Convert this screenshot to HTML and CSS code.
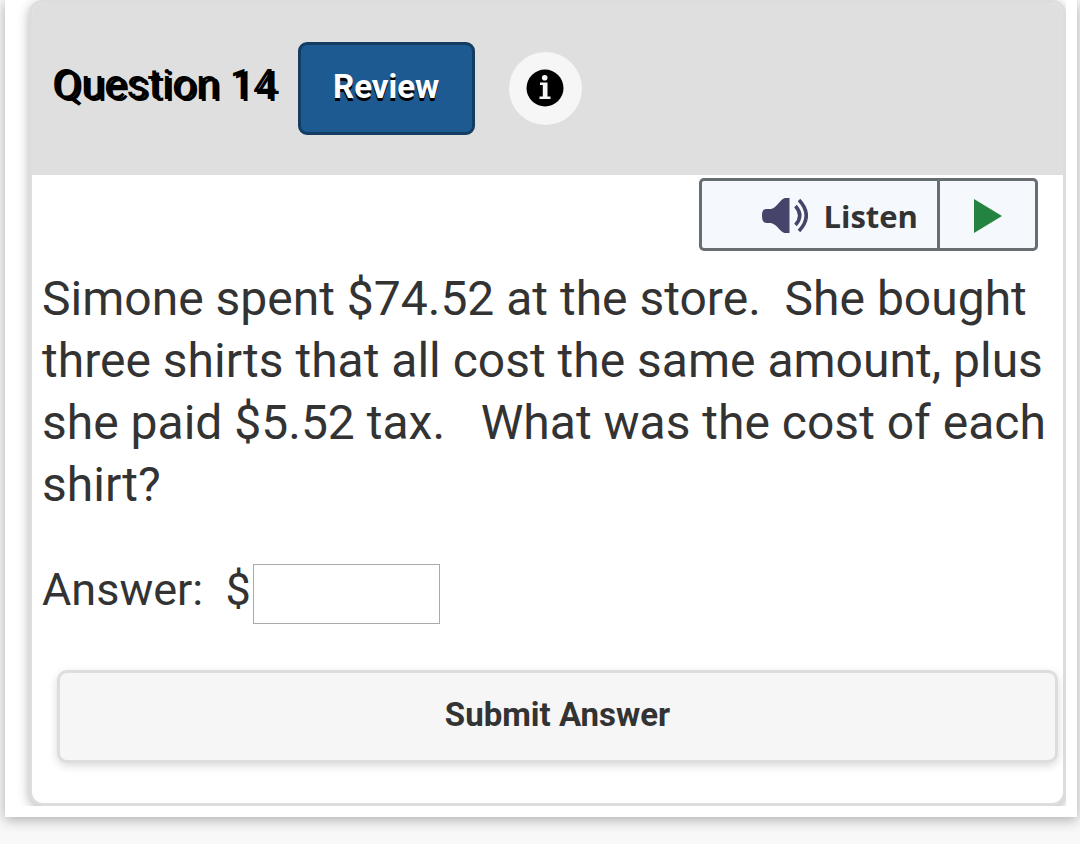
FILE: index.html
```html
<!DOCTYPE html>
<html lang="en">
<head>
  <meta charset="utf-8">
  <title>Question 14</title>
  <meta name="viewport" content="width=device-width, initial-scale=1.0">
  <link rel="stylesheet" href="styles.css">
</head>
<body>
  <main class="page">
    <div class="clip">
      <section class="question">
        <header class="question-header">
          <h1>Question 14</h1>
          <button type="button" class="review">Review</button>
          <button type="button" class="info" aria-label="Info">
            <svg width="38" height="38" viewBox="0 0 38 38">
              <circle cx="19" cy="19" r="18.5" fill="#000"/>
              <circle cx="18.7" cy="8.7" r="2.8" fill="#f6f6f6"/>
              <path d="M14 13.5h7.5V27.5H24.5V30H13.5V27.5H16.8V16H14z" fill="#f6f6f6"/>
            </svg>
          </button>
        </header>

        <div class="listen-bar">
          <button type="button" class="listen">
            <svg width="46" height="36" viewBox="0 0 46 36">
              <path d="M27.5 0v35h-5C18 34 16 27 9 25H5C1 25 0 22 0 17.5S1 11 5 11h4C15 10 18 1 23 0z" fill="#46446a"/>
              <path d="M33.5 8q8.5 9.5 0 19M37 2q14.5 15.5 0 31" fill="none" stroke="#46446a" stroke-width="3.5"/>
            </svg>
            Listen
          </button>
          <button type="button" class="play" aria-label="Play">
            <svg width="28" height="34" viewBox="0 0 28 34">
              <path d="M0 0l28 17L0 34z" fill="#258341"/>
            </svg>
          </button>
        </div>

        <form class="question-body">
          <p>Simone spent $74.52 at the store.&nbsp; She bought three shirts that all cost the same amount, plus she paid $5.52 tax.&nbsp;&nbsp; What was the cost of each shirt?</p>
          <div class="answer">
            <label for="answer">Answer:&nbsp; $</label>
            <input type="text" id="answer">
          </div>
          <button type="button" class="submit">Submit Answer</button>
        </form>
      </section>
    </div>
  </main>
</body>
</html>
```

FILE: styles.css
```css
* {
  box-sizing: border-box;
}
body {
  margin: 0;
  background-color: #f8f8f8;
  color: #333;
  font-family: Roboto, sans-serif;
}
button {
  margin: 0;
  padding: 0;
  font-family: inherit;
  font-weight: bold;
  cursor: pointer;
}
svg {
  display: block;
}
.page {
  margin: 0 3px 27px 5px;
  padding: 0 11px 11px;
  background-color: #fff;
  box-shadow: 0 3px 12px rgba(0, 0, 0, 0.3);
}
.clip {
  overflow: hidden;
  padding-left: 13px;
}
.question {
  border: 3px solid #ddd;
  border-radius: 14px;
  background-color: #fff;
  box-shadow: 0 3px 12px rgba(0, 0, 0, 0.3);
}
.question-header {
  display: flex;
  align-items: center;
  height: 172px;
  padding: 0 20px 2px;
  border-radius: 11px 11px 0 0;
  background-color: #dfdfdf;
}
h1 {
  margin: 0;
  padding-bottom: 7px;
  font-size: 42px;
  font-weight: 400;
  color: #000;
  text-shadow: 3px 2px 0 #000;
}
.review {
  width: 177px;
  height: 93px;
  margin: 0 34px 0 21px;
  padding-bottom: 4px;
  border: 3px solid #153d61;
  border-radius: 9px;
  background-color: #1d5a91;
  color: #fff;
  font-size: 33px;
  text-shadow: 0 3px 0 #000;
}
.info {
  display: flex;
  align-items: center;
  justify-content: center;
  width: 73px;
  height: 73px;
  border: none;
  border-radius: 50%;
  background-color: #f6f6f6;
}
.listen-bar {
  display: flex;
  width: 339px;
  height: 73px;
  margin: 3px 25px 0 auto;
  border: 3px solid #686d72;
  border-radius: 5px;
  background-color: #f5f8fc;
}
.listen {
  display: flex;
  flex: 1;
  align-items: center;
  justify-content: flex-end;
  gap: 15px;
  padding: 2px 19px 0 0;
  border: none;
  background: none;
  color: #333;
  font-family: "Open Sans", sans-serif;
  font-size: 31px;
}
.play {
  display: flex;
  align-items: center;
  justify-content: center;
  width: 98px;
  padding-top: 2px;
  border: none;
  border-left: 3px solid #686d72;
  background: none;
}
.question-body {
  padding: 17px 5px 40px 10px;
  font-size: 48px;
  line-height: 62px;
}
.question-body p {
  margin: 0 0 48px;
}
.answer {
  display: flex;
  gap: 2px;
}
.answer label {
  font-size: 45px;
  line-height: 52px;
}
.answer input {
  width: 187px;
  height: 60px;
  padding: 0 8px;
  border: 1px solid #aaa;
  background-color: #fff;
  color: #333;
  font-family: inherit;
  font-size: 40px;
}
.submit {
  display: block;
  width: calc(100% - 15px);
  height: 93px;
  margin: 46px 0 0 15px;
  padding-bottom: 4px;
  border: 3px solid #ddd;
  border-radius: 10px;
  background-color: #f6f6f6;
  color: #333;
  font-size: 33px;
  box-shadow: 0 3px 9px rgba(0, 0, 0, 0.15);
}
```
